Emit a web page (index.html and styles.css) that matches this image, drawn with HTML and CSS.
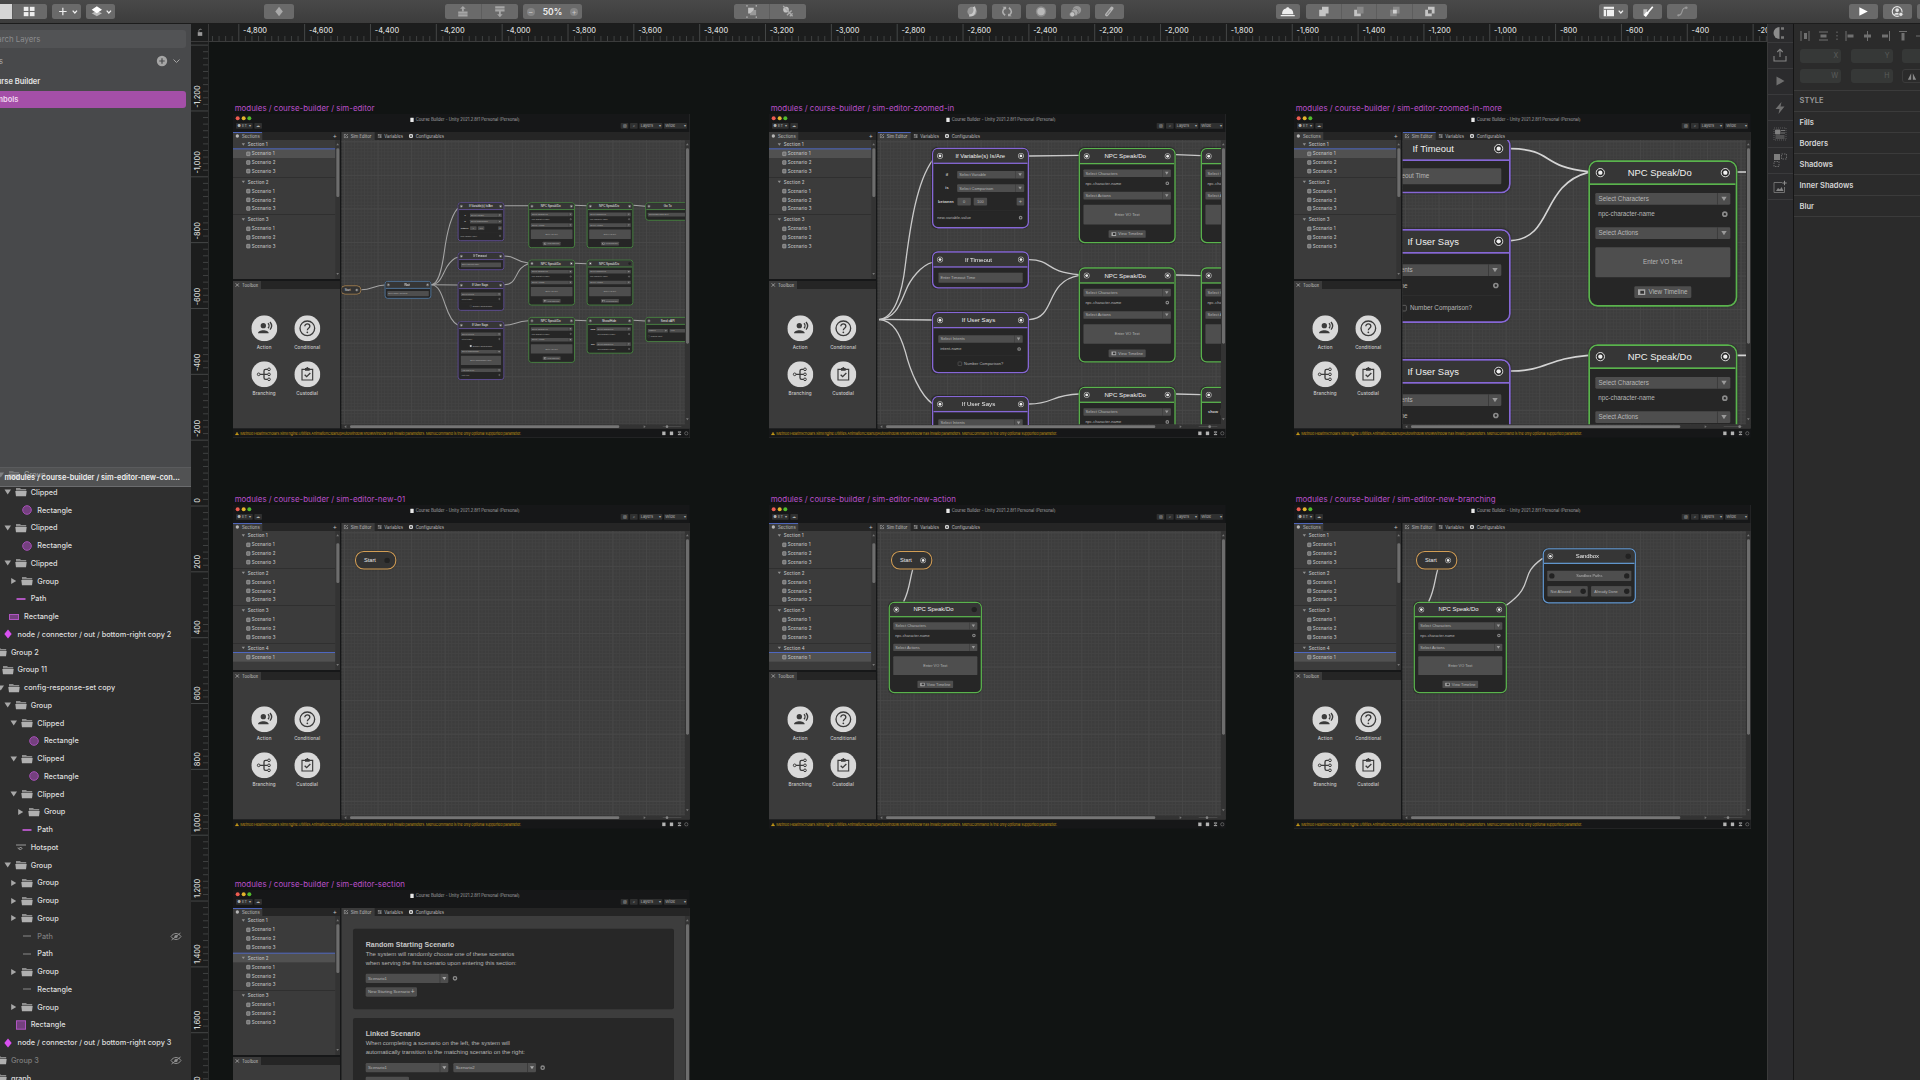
FILE: index.html
```html
<!DOCTYPE html>
<html lang="en">
<head>
<meta charset="utf-8">
<title>Course Builder</title>
<link rel="stylesheet" href="styles.css">
</head>
<body>
<div class="app">
  <header class="toolbar">
    <div class="seg seg-view"><span class="btn on"></span><span class="btn"><svg viewBox="0 0 20 16"><g fill="#eee"><rect x="4" y="3" width="5" height="4.4"/><rect x="10.500" y="3" width="5" height="4.4"/><rect x="4" y="8.600" width="5" height="4.400"/><rect x="10.500" y="8.600" width="5" height="4.400"/></g></svg></span></div>
    <div class="seg s29 g5"><span class="btn"><svg viewBox="0 0 30 16"><path d="M10.500 4v8M6.500 8h8M21 7l2.300 2.600L25.600 7" fill="none" stroke="#eee" stroke-width="1.300"/></svg></span></div>
    <div class="seg s29 g5"><span class="btn"><svg viewBox="0 0 30 16"><path d="M10.500 7.500l5.500 2.300-5.500 3.200L5 9.800z" fill="#bbb"/><path d="M10.500 2.500L16 6l-5.500 3.800L5 6z" fill="#fff"/><path d="M21 7l2.300 2.600L25.600 7" fill="none" stroke="#eee" stroke-width="1.300"/></svg></span></div>
    <div class="seg s29 g149"><span class="btn"><svg viewBox="0 0 30 16"><path d="M15 3l4 5-4 5-4-5z" fill="#a9a9a9"/></svg></span></div>
    <div class="seg s73 g151"><span class="btn"><svg viewBox="0 0 36 16"><g fill="#a6a6a6"><path d="M18 2l3 3h-2v3h-2V5h-2z"/><path d="M13 8h10v2.400H13zM13 11h10v2.400H13z"/></g></svg></span><span class="btn"><svg viewBox="0 0 36 16"><g fill="#a6a6a6"><path d="M13 2.500h10v2.400H13zM13 5.500h10V8H13zM17 8h2v3h2l-3 3-3-3h2z"/></g></svg></span></div>
    <div class="seg s60 g5 zoom"><i class="rnd">−</i><b>50%</b><i class="rnd">+</i></div>
    <div class="seg s73 g151"><span class="btn"><svg viewBox="0 0 36 16"><path d="M14 4h6v6h-6z" fill="#c2c2c2"/><path d="M20 6.500h2.500V12H16v-2" fill="#999"/><path d="M12 2h1.500M22 2h1.500M12 14h1.500M22 14h1.500" stroke="#bbb" stroke-width="1.300"/></svg></span><span class="btn"><svg viewBox="0 0 36 16"><circle cx="16" cy="6" r="3" fill="#c2c2c2"/><path d="M17 12l5-5M20 13l3-3M13 2l10 11" stroke="#aaa" stroke-width="1.500"/></svg></span></div>
    <div class="seg s29 g152"><span class="btn"><svg viewBox="0 0 30 16"><circle cx="15" cy="8" r="5" fill="#999"/><path d="M12 12c5 1 7-5 5-9" stroke="#c8c8c8" stroke-width="2.500" fill="none"/></svg></span></div>
    <div class="seg s29 g5"><span class="btn"><svg viewBox="0 0 30 16"><path d="M13 4c-4 3-3 6 0 8M17 4c4 3 3 6 0 8" fill="none" stroke="#b0b0b0" stroke-width="1.700"/><path d="M10 3h4v3zM20 13h-4v-3z" fill="#b0b0b0"/></svg></span></div>
    <div class="seg s29 g5"><span class="btn"><svg viewBox="0 0 30 16"><circle cx="15" cy="8" r="5.500" fill="#8c8c8c"/><circle cx="15" cy="8" r="4" fill="#b8b8b8"/></svg></span></div>
    <div class="seg s29 g5"><span class="btn"><svg viewBox="0 0 30 16"><circle cx="17" cy="6.500" r="4.500" fill="#999"/><circle cx="14.500" cy="9" r="3.800" fill="#aaa" stroke="#6a6a6a" stroke-width=".7"/><circle cx="12" cy="11" r="2.800" fill="#c2c2c2" stroke="#6a6a6a" stroke-width=".7"/></svg></span></div>
    <div class="seg s29 g5"><span class="btn"><svg viewBox="0 0 30 16"><path d="M12.500 11.500l5.500-7" stroke="#b5b5b5" stroke-width="3.600" stroke-linecap="round"/><path d="M12.500 11.500l4-5" stroke="#888" stroke-width="1.200"/></svg></span></div>
    <div class="seg s25 g151"><span class="btn"><svg viewBox="0 0 25 16"><path d="M6.500 11c0-4 1.500-5.500 4.500-6.500 0-1.500 3-1.500 3 0 3 1 4.500 2.500 4.500 6.500z" fill="#eee"/><path d="M5 12.500h15" stroke="#eee" stroke-width="1.300"/></svg></span></div>
    <div class="seg s141 g6"><span class="btn"><svg viewBox="0 0 36 16"><path d="M16 3h7v7h-3v3h-7V6h3z" fill="#c4c4c4"/></svg></span><span class="btn"><svg viewBox="0 0 36 16"><path d="M16 3h7v7h-7z" fill="#888"/><path d="M13 6h3v4h4v3h-7z" fill="#c4c4c4"/></svg></span><span class="btn"><svg viewBox="0 0 36 16"><path d="M16 3h7v7h-3v3h-7V6h3z" fill="#8a8a8a"/><path d="M16 6h4v4h-4z" fill="#d0d0d0"/></svg></span><span class="btn"><svg viewBox="0 0 36 16"><path d="M16 3h7v7h-3v3h-7V6h3z" fill="#c4c4c4"/><path d="M16 6h4v4h-4z" fill="#666"/></svg></span></div>
    <div class="seg s29 g152"><span class="btn"><svg viewBox="0 0 30 16"><path d="M5 3h11v10H5z" fill="#f0f0f0"/><path d="M5 5.700h11M8 5.700V13" stroke="#666" stroke-width=".9"/><path d="M21 7l2.300 2.600L25.600 7" fill="none" stroke="#eee" stroke-width="1.300"/></svg></span></div>
    <div class="seg s29 g5"><span class="btn"><svg viewBox="0 0 30 16"><path d="M10 5.500h4.500L12 12h-2z" fill="#bbb"/><path d="M11.500 13l3-4" stroke="#fff" stroke-width="3"/><path d="M14 10l6-7" stroke="#fff" stroke-width="1.800"/></svg></span></div>
    <div class="seg s29 g5"><span class="btn"><svg viewBox="0 0 30 16"><path d="M11 12c6 0 2-8 8-8" fill="none" stroke="#999" stroke-width="1.200"/><circle cx="11" cy="12" r="1.200" fill="#999"/><circle cx="19.500" cy="4" r="1.400" fill="#999"/></svg></span></div>
    <div class="seg s29 g153"><span class="btn"><svg viewBox="0 0 30 16"><path d="M11 3.500l9 4.500-9 4.500z" fill="#fff"/></svg></span></div>
    <div class="seg s29 g5"><span class="btn"><svg viewBox="0 0 30 16"><circle cx="14" cy="8" r="5.200" fill="none" stroke="#e5e5e5" stroke-width="1.200"/><circle cx="14" cy="6.500" r="2" fill="#e5e5e5"/><path d="M10.500 11.500c1-3 6-3 7 0z" fill="#e5e5e5"/><circle cx="18" cy="11" r="2.300" fill="#e5e5e5" stroke="#666" stroke-width=".8"/></svg></span></div>
    <div class="seg s29 g5"><span class="btn"></span></div>
  </header>
  <div class="workspace">
    <aside class="layers">
      <div class="pages">
        <div class="search"><span class="tail w40">Search Layers</span></div>
        <div class="pages-head"><span class="tail w3">Pages</span><svg viewBox="0 0 26 12"><circle cx="6" cy="6" r="5.200" fill="#a5a5a5"/><path d="M6 3.300v5.400M3.300 6h5.400" stroke="#48494b" stroke-width="1.200"/><path d="M17.500 4.500l3 3 3-3" fill="none" stroke="#a5a5a5" stroke-width="1"/></svg></div>
        <div class="page"><span class="tail w40">Course Builder</span></div>
        <div class="page active"><span class="tail w18">Symbols</span></div>
      </div>
      <div class="tree">
        <div class="pinned">modules / course-builder / sim-editor-new-con...</div>
      </div>
    </aside>
    <div class="stage-wrap">
      <div class="ruler-corner"><svg viewBox="0 0 10 12"><path d="M2 5.500h6v5H2z" fill="#999"/><path d="M3.500 5.500V3.300a2 2 0 0 1 3.800-.6" fill="none" stroke="#999" stroke-width="1"/></svg></div>
      <div class="ruler-h"></div>
      <div class="ruler-v"></div>
      <main class="canvas"></main>
    </div>
    <nav class="plugins">
      <span class="first"><svg viewBox="0 0 14 14"><path d="M6.500 1v12A6 6 0 0 1 6.500 1z" fill="#8c8c8c"/><path d="M8 2.500h3M8 11.500h3" stroke="#777" stroke-width="2.500"/></svg></span>
      <span><svg viewBox="0 0 14 14"><path d="M7 9V1.500M4.300 4L7 1.300 9.700 4M1 8v5h12V8" fill="none" stroke="#858585" stroke-width="1.100"/></svg></span>
      <span><svg viewBox="0 0 14 14"><path d="M3.500 2.500l8 4.500-8 4.500z" fill="#6f6f6f"/></svg></span>
      <span><svg viewBox="0 0 14 14"><path d="M8.500 1L2.500 8h4l-1 5 6-7.500h-4z" fill="#6f6f6f"/></svg></span>
      <span><svg viewBox="0 0 14 14"><path d="M1 1h12v12H1z" fill="none" stroke="#666" stroke-width=".8" stroke-dasharray="1 1"/><path d="M2.500 3H7v4H2.500zM8 3.500h4M8 6h4M2.500 9h9M2.500 11h9" fill="#808080" stroke="#808080" stroke-width=".9"/></svg></span>
      <span><svg viewBox="0 0 14 14"><path d="M1 1h6v6H1z" fill="#7d7d7d"/><path d="M8.500 1h5v5h-5zM1 8.500h5v5H1z" fill="none" stroke="#777" stroke-width=".8" stroke-dasharray="1.500 1"/></svg></span>
      <span><svg viewBox="0 0 14 14"><path d="M9 2.500H1v10h10.500V7" fill="none" stroke="#777" stroke-width=".9"/><path d="M3 11l2-3 2 1.500L8.500 7l2 4z" fill="#858585"/><path d="M11.500.8v4.400M9.300 3h4.400" stroke="#8c8c8c"/></svg></span>
    </nav>
    <aside class="inspector">
      <div class="align">
        <svg viewBox="0 0 126 12"><g stroke="#707070" fill="#707070"><path d="M7 1v10M15 1v10" fill="none"/><path d="M10 3h3v6h-3z" stroke="none"/><path d="M25 2h9M25 10h9"/><path d="M26.500 4.500h6v3h-6z" stroke="none"/><path d="M43 1.500v9" stroke-dasharray="1.500 2"/><path d="M52 1v10"/><path d="M53.500 4.500h6v3h-6z" stroke="none"/><path d="M73.500 1v10"/><path d="M70 4.500h7v3h-7z" stroke="none"/><path d="M95.500 1v10"/><path d="M88 4.500h6v3h-6z" stroke="none"/><path d="M105 1.500h8"/><path d="M107.500 3h3v7.500h-3z" stroke="none"/><path d="M122 6h4"/></g></svg>
      </div>
      <div class="fields"><span>X</span><span>Y</span><span></span><span>W</span><span>H</span><span class="flip"><svg viewBox="0 0 12 10"><path d="M5 1v8H1zM7 1v8h4z" fill="#8a8a8a"/></svg></span></div>
      <h6>STYLE</h6>
      <p>Fills</p><p>Borders</p><p>Shadows</p><p>Inner Shadows</p><p>Blur</p>
    </aside>
  </div>
</div>
<script src="app.js"></script>
</body>
</html>
```
FILE: styles.css
```css
* { box-sizing: border-box; }
html, body { margin: 0; height: 100%; overflow: hidden; background: #111413; }
body { font-family: Inter, "Liberation Sans", sans-serif; font-size: 8px; color: #d6d6d6; }
svg { display: block; }
.app { width: 1920px; height: 1080px; display: flex; flex-direction: column; overflow: hidden; }

/* toolbar */
.toolbar { height: 24px; flex: none; display: flex; align-items: flex-start; padding-top: 4.300px; background: linear-gradient(#494949, #3c3c3c); border-bottom: 1px solid #1c1c1c; }
.seg { height: 15px; flex: none; display: flex; background: #6a6a6a; border-radius: 2.500px; overflow: hidden; }
.seg .btn { flex: 1; display: flex; align-items: center; justify-content: center; }
.seg .btn + .btn { border-left: 1px solid #5d5d5d; }
.seg .btn svg { height: 15px; max-width: 100%; }
.seg-view { width: 47px; border-radius: 0 2.500px 2.500px 0; }
.seg-view .on { background: #d5d5d5; flex: 0 0 11.500px; }
.s29 { width: 29.200px; }
.s25 { width: 24.700px; }
.s60 { width: 59.500px; }
.s73 { width: 72.400px; }
.s141 { width: 141px; }
.g5 { margin-left: 5.060px; }
.g6 { margin-left: 6px; }
.g149 { margin-left: 149px; }
.g151 { margin-left: 151.600px; }
.g152 { margin-left: 151.700px; }
.g153 { margin-left: 152.200px; }
.zoom { align-items: center; justify-content: space-between; padding: 0 4px; }
.zoom b { font-size: 8.500px; font-weight: 600; color: #f0f0f0; }
.rnd { width: 8px; height: 8px; border-radius: 50%; background: #858585; color: #c8c8c8; font: 8px/8px Inter, sans-serif; text-align: center; }

.workspace { flex: 1; display: flex; min-height: 0; }

/* layer list */
.layers { width: 191px; flex: none; display: flex; flex-direction: column; background: #2f2f2f; overflow: hidden; }
.pages { height: 443px; flex: none; background: #48494b; padding: 6px 5px 0 0; }
.tail { display: flex; justify-content: flex-end; white-space: nowrap; }
.w40 { width: 40.300px; }
.w18 { width: 18.300px; }
.w3 { width: 3px; }
.search { height: 17.500px; background: #525355; border-radius: 0 3px 3px 0; color: #8b8c8e; display: flex; align-items: center; font-size: 7.800px; }
.pages-head { height: 25px; padding-top: 1px; display: flex; align-items: center; justify-content: space-between; color: #a8a8a8; padding-right: 4px; }
.pages-head svg { width: 26px; height: 12px; }
.page { height: 17.500px; display: flex; align-items: center; font-size: 7.500px; font-weight: 600; color: #e4e4e4; }
.page.active { background: #a44fa8; border-radius: 0 3px 3px 0; color: #f0d8f0; position: relative; top: .5px; }
.tree { flex: 1; min-height: 0; position: relative; margin-top: -1.200px; }
.pinned { position: absolute; left: 0; right: 0; top: 1px; height: 20px; background: rgba(104, 105, 107, .62); border-top: 1px solid #5a5b5d; border-bottom: 1px solid #6b6c6e; padding-left: 4.500px; line-height: 19px; font-size: 7.380px; font-weight: 600; color: #f0f0f0; white-space: nowrap; }
.row { height: 17.760px; display: flex; align-items: center; white-space: nowrap; font-size: 7.300px; font-weight: 500; color: #dedede; }
.row.dim { color: #7d7d7d; }
.row .ico { width: 12px; height: 10px; margin-right: 4px; flex: none; }
.row .tw { width: 12px; height: 8px; flex: none; }
.row .eye { width: 12px; height: 9px; margin-left: auto; margin-right: 9px; flex: none; }

/* rulers and canvas */
.stage-wrap { flex: none; width: 1575.500px; display: grid; grid-template: 18px 1fr / 18px 1fr; min-height: 0; }
.ruler-corner, .ruler-h, .ruler-v { background: #1c1d1d; overflow: hidden; }
.ruler-corner { border-right: 1px solid #3a3a3a; border-bottom: 1px solid #3a3a3a; display: flex; align-items: center; justify-content: center; }
.ruler-corner svg { width: 8px; height: 9px; }
.ruler-h { border-bottom: 1px solid #3a3b3b; }
.ruler-v { border-right: 1px solid #2e2f2f; }
.ruler-h svg, .ruler-v svg { overflow: visible; }
.ruler-text { font: 500 7.300px Inter, sans-serif; fill: #d8dad9; }
.canvas { position: relative; overflow: hidden; background: #111413; }
.board { position: absolute; width: 457px; }
.board-name { position: absolute; left: 2px; top: -11px; font-size: 7.920px; line-height: 11px; color: #b950c9; white-space: nowrap; }

/* mocked editor window, laid out at three times its canvas size */
.win { width: 1370px; height: 971px; transform: scale(.33333); transform-origin: 0 0; background: #161718; color: #c0c0c0; font-size: 13.500px; display: flex; flex-direction: column; position: relative; }
.win-title { height: 54px; flex: none; display: grid; grid-template-rows: 25px 29px; }
.win-top { display: grid; grid-template-columns: 532px 1fr; align-items: center; padding-top: 10px; height: 25px; }
.lights { display: flex; gap: 5.500px; padding-left: 8px; margin-top: -10px; }
.lights i { width: 12px; height: 12px; border-radius: 50%; background: #ee5c50; }
.lights i:nth-child(2) { background: #e3b42c; }
.lights i:nth-child(3) { background: #52bb2c; }
.caption { display: flex; align-items: center; gap: 6px; color: #a8a8a8; font-size: 12.400px; }
.caption i { width: 10px; height: 13px; background: #e8e8e8; border-radius: 1px; }
.win-tools { display: flex; align-items: center; gap: 5px; padding: 0 8px 8px 9px; font-size: 12px; }
.tool { height: 17px; background: #2f3030; border-radius: 2px; display: flex; align-items: center; justify-content: space-between; padding: 0 4px; color: #b0b0b0; }
.tool.sm { width: 23px; justify-content: center; padding: 0; }
.tool.wide { width: 69px; }
.push { margin-left: auto; }
.win-body { flex: 1; min-height: 0; display: grid; grid-template-columns: 321px 1044px; column-gap: 5px; }
.left { display: grid; grid-template-rows: 441px 442px; row-gap: 6px; min-height: 0; }
.pane { display: flex; flex-direction: column; background: #3b3b3b; min-height: 0; overflow: hidden; }
.tabs { height: 24px; flex: none; background: #252525; display: flex; align-items: stretch; }
.tab { display: flex; align-items: center; gap: 7px; padding: 0 8px 0 6px; letter-spacing: .1px; font-size: 12.800px; }
.tab svg { width: 14px; height: 14px; flex: none; }
.main .tab { width: 99px; padding-right: 0; white-space: nowrap; }
.main .tab + .tab { width: 94px; padding-left: 8px; font-size: 12.600px; }
.tab.on { background: #3b3b3b; }
.tab.focus { box-shadow: inset 0 3px #4d64b8; }
.plus { margin-left: auto; padding-right: 9px; font-size: 19px; line-height: 22px; }
.list-wrap { flex: 1; display: flex; min-height: 0; }
.list { width: 307px; overflow: hidden; }
.group { height: 112.500px; border-bottom: 2px solid #2b2b2b; font-weight: 500; font-size: 13.200px; letter-spacing: .4px; }
.group.last { border: 0; }
.item { height: 26px; display: flex; align-items: center; padding-left: 40px; gap: 4px; }
.item.head { padding-left: 26px; gap: 8px; margin-bottom: 2px; }
.item.sel { background: #515151; box-shadow: 0 -3px #4e67c0; }
.item i { width: 12px; height: 13px; border: 2px solid #a8a8a8; border-radius: 2px; background: #777; }
.item.head i { width: 0; height: 0; border: 5px solid transparent; border-top: 7px solid #909090; border-bottom: 0; background: none; border-radius: 0; }
.vbar { width: 14px; flex: none; background: #333; display: flex; flex-direction: column; align-items: center; justify-content: space-between; padding: 10px 0 12px; position: relative; }
.vbar::before, .vbar::after { content: ""; border: 4px solid transparent; border-bottom: 6px solid #777; border-top: 0; }
.vbar::after { border-top: 6px solid #777; border-bottom: 0; }
.vbar i { position: absolute; left: 3px; width: 9px; top: 25px; border-radius: 4px; background: #6d6d6d; }
.len-a { height: 146px; }
.vbar .len-b { top: 37px; height: 119px; }
.vbar .len-c { height: 586px; }
.kit { display: grid; grid-template-columns: 129px 129px; grid-template-rows: 138px 138px; padding: 79px 0 0 29px; }
.kit div { display: flex; flex-direction: column; align-items: center; gap: 9px; font-weight: 500; font-size: 13.800px; letter-spacing: .3px; line-height: 17px; color: #cdcdcd; }
.kit svg { width: 78px; height: 78px; }
.main { display: grid; grid-template-columns: 1030px 14px; grid-template-rows: 24px 853px 13px; background: #3b3b3b; min-height: 0; }
.main .tabs { grid-column: 1 / 3; }
.view { position: relative; overflow: hidden; background-color: #3d3d3d; }
.view.grid { background-image: linear-gradient(#474747 2px, transparent 2px), linear-gradient(90deg, #464646 2px, transparent 2px), linear-gradient(#424242 2px, transparent 2px), linear-gradient(90deg, #424242 2px, transparent 2px); background-size: 100.700px 100.700px, 100.700px 100.700px, 10.070px 10.070px, 10.070px 10.070px; background-position: 7px 4px; }
.hbar { background: #333; grid-column: 1 / 3; display: flex; align-items: center; padding-left: 8px; }
.hbar::before { content: ""; border: 4px solid transparent; border-right: 6px solid #777; border-left: 0; }
.hbar .thumb { width: 808px; height: 8px; margin-left: 11px; border-radius: 4px; background: #757575; }
.hbar .next { margin-left: 73px; border: 4px solid transparent; border-left: 6px solid #777; border-right: 0; }
.hbar .slider { margin-left: 51px; width: 56px; height: 2px; background: #555; display: flex; align-items: center; }
.hbar .slider i { width: 8px; height: 8px; border-radius: 50%; background: #858585; flex: none; }
.status { height: 28px; flex: none; display: flex; align-items: center; padding: 2px 3px 0 6px; gap: 4px; color: #bf9215; font-size: 11.300px; white-space: nowrap; letter-spacing: -.42px; }
.status svg { width: 12px; height: 11px; }
.status .tray { margin-left: auto; width: 80px; height: 14px; }

/* graph */
.pan { position: absolute; width: 0; height: 0; }
.edges { position: absolute; left: 0; top: 0; overflow: visible; }
.edges path { fill: none; stroke: #c9c9c9; stroke-width: 4; }
.far .edges path { stroke: #a4a4a4; stroke-width: 3.200; }
.near .edges path { stroke-width: 5; stroke: #d4d4d4; }
.node { position: absolute; width: 447px; transform-origin: 0 0; background: #262626; border: 5px solid var(--c); border-radius: 28px; overflow: hidden; font-family: "Liberation Sans", Arial, sans-serif; font-size: 19px; color: #b6b6b6; box-shadow: 0 0 5px rgba(0, 0, 0, .35); }
.mid .node { border-width: 6px; font-size: 18.500px; }
.mid .node h4 { border-bottom-width: 6px; }
.far .node { border-width: 8px; }
.far .node h4 { border-bottom-width: 8px; }
.green { --c: #5ab34d; }
.purple { --c: #8667d6; }
.blue { --c: #6297cf; }
.far .green { --c: #4c8f45; }
.far .purple { --c: #6753a3; }
.far .blue { --c: #5680ab; }
.node h4 { margin: 0; height: 69px; padding: 0 16px; display: flex; align-items: center; justify-content: space-between; background: #363636; border-bottom: 5px solid var(--c); font-weight: 400; font-size: 28.300px; color: #f0f0f0; }
.far .node h4 { height: 66px; padding: 0 12px; }
.node h4 span { padding-right: 18px; }
.node h4 span.flush { padding-right: 2px; font-size: 27px; }
.node h4 svg, .pill svg, .slot svg { width: 30px; height: 30px; flex: none; }
.line { display: flex; align-items: center; justify-content: space-between; height: 35px; margin: 0 16px; }
.box { display: flex; align-items: center; height: 35px; background: #4e4e4e; border-radius: 4px; padding-left: 10px; white-space: nowrap; flex: 1; }
.box.center { justify-content: center; padding: 0; }
.box .dd { margin-left: auto; width: 40px; height: 100%; border-left: 2px solid #333; display: flex; align-items: center; justify-content: center; }
.dd::before { content: ""; border: 8px solid transparent; border-top: 13px solid #9a9a9a; border-bottom: 0; }
.area { height: 90px; }
.cfg { width: 17px; height: 17px; border: 5px solid #8a8a8a; border-radius: 50%; flex: none; margin-right: 8px; }
.name { padding-left: 9px; }
.rule { height: 2px; background: #333; margin: 0 24px; }
.lbl { width: 94px; text-align: center; color: #d0d0d0; font-size: 18px; font-weight: 700; flex: none; }
.chk { width: 19px; height: 19px; border: 2px solid #777; border-radius: 4px; margin-right: 10px; }
.chk.on { background: #ccc; }
.mc { justify-content: center; }
.inset { margin: 0 23px; }
.vt { flex: 0 0 171px; gap: 10px; }
.vt i { width: 22px; height: 17px; border: 4px solid #aaa; background: #333; border-left-width: 7px; }
.num { flex: 0 0 62px; margin-right: 13px; }
.num.add { flex-basis: 35px; margin: 0 0 0 auto; font-size: 26px; }
.m11 { height: 11px; } .m13 { height: 13px; } .m20 { height: 20px; } .m22 { height: 22px; } .m24 { height: 24px; } .m27 { height: 27px; } .m32 { height: 32px; }
.pill { position: absolute; transform-origin: 0 0; width: 198px; height: 89px; border: 5px solid #d39e55; border-radius: 42px; background: #333; display: flex; align-items: center; justify-content: space-between; padding: 0 24px 0 38px; font: 27px "Liberation Sans", Arial, sans-serif; color: #e6e6e6; box-shadow: 0 0 8px rgba(0, 0, 0, .4); }
.far .pill { border-width: 8px; border-color: #a88350; padding: 0 20px 0 30px; }
.slot { height: 50px; justify-content: space-between; padding: 0 7px 0 16px; }
.slot.full { padding: 0 7px; }
.split { gap: 16px; height: 50px; }

/* section form */
.form { padding: 38px 29px 0 34px; display: flex; flex-direction: column; gap: 26px; }
.card { background: #272727; border-radius: 6px; height: 242px; flex: none; width: 963px; padding: 34px 38px; font: 18px/26px "Liberation Sans", Arial, sans-serif; letter-spacing: -.1px; color: #b4b4b4; }
.card h3 { margin: 0 0 3px; font: 700 21px/26px "Liberation Sans", Arial, sans-serif; color: #c8c8c8; letter-spacing: .1px; }
.card .line { margin: 20px 0 13px; height: 28px; justify-content: flex-start; gap: 15px; }
.card .box { flex: 0 0 248px; height: 28px; padding-left: 7px; font-size: 12.800px; color: #b8b8b8; }
.card .box .dd { width: 26px; }
.card .dd::before { border: 6px solid transparent; border-top: 9px solid #aaa; border-bottom: 0; }
.card .cfg { width: 14px; height: 14px; border-width: 4px; margin-left: -2px; }
.card .more { width: 154px; justify-content: space-between; padding-right: 7px; }
.card .more.short { width: 130px; }
.card .more b { font-size: 20px; font-weight: 400; }

/* right columns */
.plugins { width: 27px; flex: none; background: #2b2b2d; border-right: 1px solid #151515; border-left: 1px solid #3a3a3a; display: flex; flex-direction: column; }
.plugins span { height: 26.300px; flex: none; display: flex; align-items: center; justify-content: center; border-bottom: 1px solid #3a3a3c; }
.plugins .first { height: 18.500px; }
.plugins svg { width: 14px; height: 14px; }
.inspector { flex: 1; background: #2b2b2b; overflow: hidden; }
.align { height: 25px; padding-top: 6px; }
.align svg { width: 126px; height: 12px; }
.fields { display: grid; grid-template-columns: 41.700px 41.700px 41.700px; gap: 6px 9.700px; padding: 0 0 7px 6px; border-bottom: 1px solid #3b3b3b; width: 160px; }
.fields span { height: 14px; border-radius: 3px; background: #363837; color: #5a5c5b; font-size: 7px; line-height: 14px; text-align: right; padding-right: 3px; }
.fields .flip { background: none; border: 1px solid #3b3b3b; display: flex; align-items: center; padding-left: 4px; }
.flip svg { width: 10px; height: 9px; }
.inspector h6 { margin: 0; height: 20.500px; padding-left: 6px; font-size: 7.500px; font-weight: 600; line-height: 20px; color: #9a9a9a; border-bottom: 1px solid #3b3b3b; }
.inspector p { margin: 0; height: 21.100px; padding-left: 6px; font-size: 7.500px; font-weight: 600; line-height: 21px; color: #d6d6d6; border-bottom: 1px solid #3b3b3b; }
```
FILE: app.js
```js
const $ = s => document.querySelector(s);

/* ---- rulers ---- */
const STEP = 65.84;
function label(n) { return n.toLocaleString('en-US'); }
(function rulers() {
  let h = '', v = '';
  for (let k = -1; k < 24; k++) {
    const x = 238.8 - 209 + k * STEP;
    h += `<path d="M${x} 0V17" stroke="#454747"/><text class="ruler-text" x="${x + 4.3}" y="8.800">${label(-4800 + k * 200)}</text>`;
    for (let m = 1; m < 10; m++) h += `<path d="M${x + m * STEP / 10} 12V17" stroke="#3f4141"/>`;
  }
  for (let k = -8; k < 10; k++) {
    const y = 506 - 42 + k * STEP;
    v += `<path d="M0 ${y}H18" stroke="#454747"/><text class="ruler-text" transform="translate(8.700 ${y - 3.2}) rotate(-90)">${label(k * 200)}</text>`;
    for (let m = 1; m < 10; m++) v += `<path d="M12 ${y + m * STEP / 10}H17" stroke="#3f4141"/>`;
  }
  $('.ruler-h').innerHTML = `<svg width="1557" height="17">${h}</svg>`;
  $('.ruler-v').innerHTML = `<svg width="18" height="1038">${v}</svg>`;
})();

/* ---- layer tree: [indent, kind, text, twisty, dim] ---- */
const KINDS = {
  folder: '<path d="M1 1h4l1 1h5.200v1.500H1z" fill="#8d8d8d"/><path d="M.3 3.900h11.400l-.7 5.400H1z" fill="#b0b0b0"/>',
  oval: '<circle cx="6" cy="5" r="4.300" fill="#74407f" stroke="#a750b8"/>',
  line: '<path d="M1.500 5h9" stroke="#ad55bd" stroke-width="2"/>',
  thin: '<path d="M2 5h8" stroke="#8a8a8a"/>',
  rect: '<rect x="1.500" y="2.500" width="9" height="5" fill="#74407f" stroke="#b055c2"/>',
  square: '<rect x="1.500" y=".8" width="9" height="8.400" fill="#74407f" stroke="#b055c2"/>',
  symbol: '<path d="M6 .5L9.700 5 6 9.500 2.300 5z" fill="#d850f0"/>',
  hot: '<path d="M1 3h10M3 5.500c0 2 3 3 4 1 0-1.500-3-1.500-3 .5" fill="none" stroke="#999"/>'
};
const ROWS = [
  [17.3, 'folder', 'Group', 'd'],
  [24, 'folder', 'Clipped', 'd'], [30.6, 'oval', 'Rectangle'], [24, 'folder', 'Clipped', 'd'], [30.6, 'oval', 'Rectangle'],
  [24, 'folder', 'Clipped', 'd'], [30.6, 'folder', 'Group', 'r'], [24, 'line', 'Path'], [17.3, 'rect', 'Rectangle'],
  [10.8, 'symbol', 'node / connector / out / bottom-right copy 2'], [4.2, 'folder', 'Group 2'], [10.8, 'folder', 'Group 11', 'r'],
  [17.3, 'folder', 'config-response-set copy', 'd'], [24, 'folder', 'Group', 'd'], [30.6, 'folder', 'Clipped', 'd'], [37.2, 'oval', 'Rectangle'],
  [30.6, 'folder', 'Clipped', 'd'], [37.2, 'oval', 'Rectangle'], [30.6, 'folder', 'Clipped', 'd'], [37.2, 'folder', 'Group', 'r'],
  [30.6, 'line', 'Path'], [24, 'hot', 'Hotspot'], [24, 'folder', 'Group', 'd'], [30.6, 'folder', 'Group', 'r'], [30.6, 'folder', 'Group', 'r'],
  [30.6, 'folder', 'Group', 'r'], [30.6, 'thin', 'Path', '', 1], [30.6, 'thin', 'Path'], [30.6, 'folder', 'Group', 'r'], [30.6, 'thin', 'Rectangle'],
  [30.6, 'folder', 'Group', 'r'], [24, 'square', 'Rectangle'], [10.8, 'symbol', 'node / connector / out / bottom-right copy 3'],
  [4.2, 'folder', 'Group 3', '', 1], [4.2, 'folder', 'graph']
];
const twisty = t => `<svg class="tw" viewBox="0 0 12 8">${t === 'd' ? '<path d="M1.500 1.500h6.500L4.700 6.500z" fill="#a8a8a8"/>' : t === 'r' ? '<path d="M2.200 1v6l5-3z" fill="#a8a8a8"/>' : ''}</svg>`;
const EYE = '<svg class="eye" viewBox="0 0 12 9"><path d="M1 4.500c2.500-4 7.500-4 10 0-2.500 4-7.500 4-10 0zM1.500 8L10.500 1" fill="none" stroke="#909090"/><circle cx="6" cy="4.500" r="1.600" fill="#909090"/></svg>';
const row = ([x, kind, text, t, dim]) => `<div class="row${dim ? ' dim' : ''}" style="margin-left:${x - 21.3}px">${twisty(t)}<svg class="ico" viewBox="0 0 12 10">${KINDS[kind]}</svg>${text}${dim ? EYE : ''}</div>`;
$('.tree').insertAdjacentHTML('afterbegin', ROWS.map(row).join(''));

/* ---- graph node parts ---- */
const port = on => on
  ? '<svg viewBox="0 0 30 30"><circle cx="15" cy="15" r="12.500" fill="#262626" stroke="#e2e2e2" stroke-width="3"/><circle cx="15" cy="15" r="6.500" fill="#f0f0f0"/></svg>'
  : '<svg viewBox="0 0 30 30"><circle cx="15" cy="15" r="13" fill="#222"/></svg>';
const gap = n => `<div class="m${n}"></div>`;
const select = t => `<div class="box">${t}<span class="dd"></span></div>`;
const line = (c, k = '') => `<div class="line ${k}">${c}</div>`;
const name = t => line(`<span class="name">${t}</span><i class="cfg"></i>`);
const check = on => line(`<i class="chk${on ? ' on' : ''}"></i>Number Comparison?`, 'mc');
const rule = '<div class="rule"></div>';
const npcBody = gap(24) + line(select('Select Characters')) + gap(11) + name('npc-character-name') + gap(22) + line(select('Select Actions')) +
  '<div style="height:25px"></div>' + '<div class="line area"><div class="box area center">Enter VO Text</div></div>' + gap(27) + line('<div class="box center vt"><i></i>View Timeline</div>', 'mc');
const BODIES = {
  npc: ['green', 'NPC Speak/Do', 439, npcBody],
  timeout: ['purple', 'If Timeout', 171, gap(22) + '<div class="line inset" style="height:48px"><div class="box" style="height:48px">Enter Timeout Time</div></div>'],
  says: ['purple', 'If User Says', 282, gap(32) + line(select('Select Intents'), 'inset') + gap(11) + line('<span class="name">intent-name</span><i class="cfg"></i>', 'inset') + gap(11) + rule + gap(20) + check(0)],
  saysLong: ['purple', 'If User Says', 562, gap(32) + line(select('Select Intents'), 'inset') + gap(11) + line('<span class="name">intent-name</span><i class="cfg"></i>', 'inset') + gap(32) + check(1) + gap(20) +
    line(select('Select Comparison'), 'inset') + gap(20) + '<div class="line area inset"><div class="box area center">Enter Comparison Value</div></div>' + gap(32) + line(select('Add Unit Type'), 'inset') + gap(11) + line('<span class="name">unit-type</span><i class="cfg"></i>', 'inset')],
  vars: ['purple', 'If Variable(s) Is/Are', 372, gap(32) + line('<span class="lbl">if</span>' + select('Select Variable')) + gap(27) + line('<span class="lbl">is</span>' + select('Select Comparison')) + gap(27) +
    line('<span class="lbl" style="margin-left:-5px">between</span><div class="box center num" style="margin-left:6px">0</div><div class="box center num">100</div><div class="box center num add">+</div>') + gap(24) + rule + gap(13) + line('<span style="padding-left:2px">new-variable-value</span><i class="cfg"></i>')],
  wait: ['blue', 'Wait', 170, gap(22) + '<div class="line" style="height:50px"><div class="box" style="height:50px">Enter Name (optional)</div></div>'],
  goto: ['green', 'Go To', 176, gap(27) + line(select('Section/Scenario Next'))],
  show: ['green', 'Show/Hide', 351, gap(24) + line('<span class="lbl" style="width:70px">show</span>' + select('Select Characters')) + gap(13) + line('<span style="padding-left:80px">npc-character-name</span><i class="cfg"></i>') +
    '<div style="height:62px"></div>' + line('<span class="lbl" style="width:70px">hide</span>' + select('Select Characters')) + gap(11) + line('<span style="padding-left:80px">npc-character-name</span><i class="cfg"></i>')],
  xapi: ['green', 'Send xAPI', 240, gap(32) + '<div class="line split">' + select('Passed') + select('Verb') + '</div>' + gap(11) + line('<i class="chk"></i>Manual Input<span style="flex:1"></span>')],
  sandbox: ['blue', 'Sandbox', 264, gap(32) + '<div class="line" style="height:50px"><div class="box slot full">' + port(0) + 'Sandbox Paths' + port(0) + '</div></div>' + gap(24) +
    '<div class="line split"><div class="box slot">Not Allowed' + port(0) + '</div><div class="box slot">Already Done' + port(0) + '</div></div>']
};
function node(k, [kind, x, y, out = 1]) {
  if (kind === 'start') return `<div class="pill" style="left:${x}px;top:${y}px;transform:scale(${k})">Start${port(out)}</div>`;
  const [color, title, height, body] = BODIES[kind];
  const first = kind === 'sandbox' || kind !== 'start';
  return `<div class="node ${color}" style="left:${x}px;top:${y}px;height:${height}px;transform:scale(${k})"><h4>${port(first)}<span class="${kind === 'vars' ? 'flush' : ''}">${title}</span>${port(kind === 'sandbox' ? 0 : out)}</h4>${body}</div>`;
}

/* ---- editor window ---- */
const TOOLS = [
  ['Action', '<circle cx="36" cy="31" r="8"/><path d="M20 54c0-12 32-12 32 0z"/><path d="M50 24c4 4 4 11 0 15M56 20c6 7 6 16 0 23" fill="none" stroke="#3b3b3b" stroke-width="4"/>'],
  ['Conditional', '<circle cx="39" cy="39" r="22" fill="none" stroke="#3b3b3b" stroke-width="4"/><path d="M31.500 33c0-10 15-9 15 0 0 6-7.500 6-7.500 12" fill="none" stroke="#3b3b3b" stroke-width="4"/><circle cx="39" cy="51" r="2.600"/>'],
  ['Branching', '<g fill="none" stroke="#3b3b3b" stroke-width="3"><circle cx="22" cy="39" r="4"/><circle cx="53" cy="24" r="4"/><circle cx="53" cy="39" r="4"/><circle cx="53" cy="54" r="4"/><path d="M26 39h23M49 24h-6q-5 0-5 5v20q0 5 5 5h6" stroke-width="4"/></g>'],
  ['Custodial', '<path d="M23 24h32v32H23z" fill="none" stroke="#3b3b3b" stroke-width="3.500"/><path d="M32 20h4a3 3 0 0 1 6 0h4v8H32z"/><path d="M31 40l6 6 11-11" fill="none" stroke="#3b3b3b" stroke-width="4"/>']
];
const ICON = {
  eye: '<svg viewBox="0 0 14 14"><circle cx="7" cy="7" r="5" fill="#b5b5b5"/></svg>',
  kit: '<svg viewBox="0 0 14 14"><path d="M2 2l10 10M12 2L2 12" stroke="#aaa" stroke-width="2.500"/></svg>',
  edit: '<svg viewBox="0 0 14 14"><path d="M7 2H1.500v10.500H12V7M5 9l7.500-8" fill="none" stroke="#aaa" stroke-width="2"/></svg>',
  vars: '<svg viewBox="0 0 14 14"><path d="M1 3h12M1 7h12M1 11h12M4 1v5M10 5v7" stroke="#aaa" stroke-width="1.800"/></svg>',
  gear: '<svg viewBox="0 0 14 14"><circle cx="7" cy="7" r="4.600" fill="none" stroke="#d0d0d0" stroke-width="4"/></svg>'
};
function windowOf(b) {
  const groups = [1, 2, 3].concat(b.four ? [4] : []).map(g => {
    const n = g === 4 ? 1 : 3;
    const sel = (s) => b.sel === `${g}.${s}` ? ' sel' : '';
    let items = '';
    for (let s = 1; s <= n; s++) items += `<div class="item${sel(s)}"><i></i>Scenario ${s}</div>`;
    return `<div class="group${g === (b.four ? 4 : 3) ? ' last' : ''}"><div class="item head${sel(0)}"><i></i>Section ${g}</div>${items}</div>`;
  }).join('');
  const view = b.form ? `<div class="view form">${b.form}</div>` :
    `<div class="view grid"><div class="pan ${b.zoom}" style="left:${-b.o[0] - 326}px;top:${-b.o[1] - 78}px"><svg class="edges" width="1" height="1">${b.edges.map(d => `<path d="${d}"/>`).join('')}</svg>${b.nodes.map(n => node(b.k, n)).join('')}</div></div>`;
  return `<div class="win">
    <div class="win-title"><div class="win-top"><div class="lights"><i></i><i></i><i></i></div><div class="caption"><i></i>Course Builder - Unity 2021.2.8f1 Personal (Personal)</div></div>
      <div class="win-tools"><span class="tool" style="width:50px">● ET <span>▾</span></span><span class="tool sm">☁</span><span class="tool sm push">▧</span><span class="tool sm">⌕</span><span class="tool wide">Layers<span>▾</span></span><span class="tool wide">Wide<span>▾</span></span></div></div>
    <div class="win-body"><div class="left">
      <div class="pane"><div class="tabs"><span class="tab on${b.focus ? '' : ' focus'}">${ICON.eye}Sections</span><span class="plus">+</span></div>
        <div class="list-wrap"><div class="list">${groups}</div><div class="vbar"><i class="${b.four ? 'len-b' : 'len-a'}"></i></div></div></div>
      <div class="pane"><div class="tabs"><span class="tab on">${ICON.kit}Toolbox</span></div><div class="kit">${TOOLS.map(([t, p]) => `<div><svg viewBox="0 0 78 78" fill="#3b3b3b"><circle cx="39" cy="39" r="39" fill="#d9d9d9"/>${p}</svg>${t}</div>`).join('')}</div></div></div>
      <div class="main"><div class="tabs"><span class="tab on${b.focus ? ' focus' : ''}">${ICON.edit}Sim Editor</span><span class="tab">${ICON.vars}Variables</span><span class="tab">${ICON.gear}Configurables</span></div>
        ${view}<div class="vbar"><i class="len-c"></i></div>
        <div class="hbar"><i class="thumb"></i><i class="next"></i><span class="slider"><i style="margin-left:${b.knob || 9}px"></i></span></div></div></div>
    <div class="status"><svg viewBox="0 0 12 11"><path d="M6 0l6 11H0z" fill="#d8a616"/><path d="M6 4v3M6 8.500v1.200" stroke="#222" stroke-width="1.500"/></svg><span>Method HealthScholars.SimEngine.Utilities.AnimationCleanupAutoWindow.ShowWindow has invalid parameters. MenuCommand is the only optional supported parameter.</span>
      <svg class="tray" viewBox="0 0 80 14"><g fill="#b5b5b5"><path d="M1 2h9v10H1zM24 2h9v10h-9zM48 2h9v2h-9zM48 10h9v2h-9zM49 3l7 8M56 3l-7 8" stroke="#b5b5b5"/></g><circle cx="73" cy="7" r="5" fill="none" stroke="#999" stroke-width="1.500"/></svg></div>
  </div>`;
}
const FORM = `<div class="card"><h3>Random Starting Scenario</h3>The system will randomly choose one of these scenarios<br>when serving the first scenario upon entering this section:<div class="line">${select('Scenario1')}<i class="cfg"></i></div><div class="box more">New Starting Scenario<b>+</b></div></div>
<div class="card"><h3>Linked Scenario</h3>When completing a scenario on the left, the system will<br>automatically transition to the matching scenario on the right:<div class="line">${select('Scenario1')}${select('Scenario2')}<i class="cfg"></i></div><div class="box more short">New Scenario Linked</div></div>`;

const BOARDS = [
  { t: 'sim-editor', x: 232.7, y: 114, o: [38, 57], sel: '1.1', k: .313, zoom: 'far',
    nodes: [['start', 361, 571], ['wait', 493, 558], ['vars', 711.5, 322], ['timeout', 711.5, 471.5], ['says', 711.5, 558.5], ['saysLong', 711.5, 679],
      ['npc', 924, 322], ['npc', 1099, 322], ['goto', 1275, 322], ['npc', 924, 493.5], ['npc', 1099, 493.5, 0], ['npc', 924, 665.5], ['show', 1099, 665.5], ['xapi', 1275, 665.5]],
    edges: ['M423 584C455 584 460 571 493 570', 'M633 569C655 569 665 520 672 470C680 410 690 365 712 340', 'M633 569C660 569 665 540 680 515C690 500 700 490 712 487', 'M633 569L712 570', 'M633 569C655 569 665 600 675 630C685 660 697 683 712 690',
      'M852 332H924', 'M1064 331L1099 332', 'M1239 331L1275 334', 'M852 483C890 483 885 502 924 504', 'M852 569C895 569 880 520 924 506', 'M1064 505L1099 506', 'M852 691C885 691 885 679 924 677', 'M1064 676L1099 677', 'M1239 676L1275 678'] },
  { t: 'sim-editor-zoomed-in', x: 768.7, y: 114, o: [26, 57], sel: '1.1', k: .651, zoom: 'mid', focus: 1, knob: 29,
    nodes: [['vars', 515, 158], ['npc', 955, 159], ['npc', 1321, 159], ['timeout', 515, 469], ['says', 515, 651], ['npc', 955, 517], ['npc', 1321, 517], ['says', 515, 903], ['npc', 955, 875], ['show', 1321, 875]],
    edges: ['M356 674C400 670 425 600 435 510C450 390 470 260 516 197', 'M356 674C400 670 415 640 435 590C450 550 485 510 516 502', 'M356 673L516 675', 'M356 674C400 676 420 720 435 770C450 830 480 900 516 926', 'M806 183L957 181', 'M1247 179L1323 182',
      'M806 494C880 496 850 530 957 539', 'M806 674C890 670 850 560 957 541', 'M1247 540L1323 542', 'M806 927C880 927 870 900 957 897', 'M1247 897L1323 899'] },
  { t: 'sim-editor-zoomed-in-more', x: 1293.7, y: 114, o: [41, 57], sel: '1.1', k: 1, zoom: 'near', focus: 1, knob: 44,
    nodes: [['timeout', 244, 124], ['says', 244, 402], ['says', 244, 792], ['npc', 923.5, 195.5], ['npc', 923.5, 748]],
    edges: ['M692 161C820 163 780 215 924 230', 'M692 437C820 430 780 270 924 232', 'M692 828C800 828 800 790 924 781', 'M1371 231H1400', 'M1371 781H1400'] },
  { t: 'sim-editor-new-01', x: 232.7, y: 505, o: [38, 46], sel: '4.1', four: 1, k: .626, zoom: 'mid', nodes: [['start', 404, 184, 0]], edges: [] },
  { t: 'sim-editor-new-action', x: 768.7, y: 505, o: [26, 46], sel: '4.1', four: 1, k: .626, zoom: 'mid', knob: 21, nodes: [['start', 392, 184], ['npc', 384.5, 336, 0]], edges: ['M457 240C448 270 448 300 430 336'] },
  { t: 'sim-editor-new-branching', x: 1293.7, y: 505, o: [41, 46], sel: '4.1', four: 1, k: .626, zoom: 'mid', nodes: [['start', 407, 184], ['npc', 399.5, 336], ['sandbox', 786.5, 176]], edges: ['M472 240C463 270 463 300 445 336', 'M678 347C770 280 710 260 787 206'] },
  { t: 'sim-editor-section', x: 232.7, y: 890, sel: '2.0', form: FORM }
];
$('.canvas').innerHTML = BOARDS.map(b => `<section class="board" style="left:${b.x - 209}px;top:${b.y - 42}px"><div class="board-name">modules / course-builder / ${b.t}</div>${windowOf(b)}</section>`).join('');
```
